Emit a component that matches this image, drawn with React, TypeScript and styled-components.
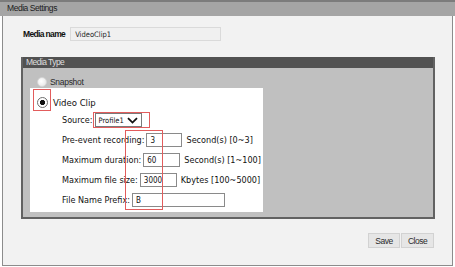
import React from "react";
import styled, { createGlobalStyle } from "styled-components";

const Global = createGlobalStyle`
  html, body { margin: 0; padding: 0; background: #ffffff; }
  body { font-family: "Liberation Sans", Arial, sans-serif; }
  * { box-sizing: border-box; }
`;

const Dialog = styled.div`
  width: 455px;
  height: 267px;
  display: flex;
  flex-direction: column;
  background: #ffffff;
`;

const TitleBar = styled.div`
  height: 16px;
  border-top: 2px solid #7c7c7c;
  background: #a5a5a5;
  color: #1c1c1c;
  font-size: 8.5px;
  letter-spacing: -0.45px;
  line-height: 13px;
  padding-left: 7px;
`;

const Body = styled.div`
  flex: 1;
  margin: 0 2px 1px 2px;
  border: 1px solid #8c8c8c;
  border-top: none;
  background: #f2f2f2;
  display: flex;
  flex-direction: column;
  padding: 11px 0 0 18px;
`;

const NameRow = styled.div`
  display: flex;
  align-items: center;
  height: 14px;
  padding-left: 2px;
  gap: 5px;
`;

const NameLabel = styled.span`
  font-size: 8.5px;
  letter-spacing: -0.65px;
  font-weight: bold;
  color: #111;
`;

const NameInput = styled.input`
  width: 151px;
  height: 14px;
  border: 1px solid #dadada;
  background: #f0f0f0;
  font-family: "DejaVu Sans Condensed", "DejaVu Sans", sans-serif;
  font-stretch: condensed;
  font-size: 7.5px;
  color: #222222;
  -webkit-text-fill-color: #222222;
  padding: 0 0 0 4px;
  margin: 0;
  outline: none;
`;

const Panel = styled.div`
  margin-top: 16px;
  width: 414px;
  height: 162px;
  border: 2px solid #626262;
  border-top: none;
  display: flex;
  flex-direction: column;
`;

const PanelHeader = styled.div`
  height: 11px;
  background: #525252;
  color: #dedede;
  font-size: 8.5px;
  letter-spacing: -0.55px;
  line-height: 11px;
  padding-left: 3px;
`;

const PanelBody = styled.div`
  flex: 1;
  background: #c0c0c0;
  padding: 7px 0 0 7px;
  display: flex;
  flex-direction: column;
`;

const SnapshotRow = styled.div`
  display: flex;
  align-items: center;
  height: 13px;
  padding-left: 7px;
  gap: 3px;
  font-size: 8.5px;
  letter-spacing: -0.3px;
  color: #2a2a2a;
`;

const Radio = styled.span<{ $checked?: boolean; $disabled?: boolean }>`
  display: inline-block;
  width: ${(p) => (p.$checked ? 11 : 10)}px;
  height: ${(p) => (p.$checked ? 11 : 10)}px;
  border-radius: 50%;
  border: 1px solid ${(p) => (p.$disabled ? "#d6d6d6" : "#6e6e6e")};
  background: ${(p) =>
    p.$disabled
      ? "radial-gradient(circle at 40% 40%, #ffffff, #e2e2e2)"
      : p.$checked
      ? "radial-gradient(circle, #111 0 2.4px, #ffffff 2.9px)"
      : "#fff"};
  flex: none;
`;

const WhiteBox = styled.div`
  position: relative;
  width: 233px;
  height: 124px;
  background: #ffffff;
  padding-top: 5px;
  display: flex;
  flex-direction: column;
  font-family: "DejaVu Sans Condensed", "DejaVu Sans", sans-serif;
  font-stretch: condensed;
  font-size: 9px;
  color: #111;
`;

const VideoRow = styled.div`
  display: flex;
  align-items: center;
  height: 18px;
  padding-left: 7px;
  gap: 5px;
  font-size: 9.5px;
`;

const FormRows = styled.div`
  margin-top: 2px;
  display: flex;
  flex-direction: column;
  gap: 6px;
  padding-left: 32px;
`;

const FormRow = styled.div`
  display: flex;
  align-items: center;
  height: 14px;
  white-space: nowrap;
`;

const FieldInput = styled.input<{ $w: number }>`
  width: ${(p) => p.$w}px;
  height: 14px;
  margin: 0 0 0 2px;
  padding: 0 0 0 3px;
  border: 1px solid #8a8a8a;
  background: #fff;
  font-family: "DejaVu Sans Condensed", "DejaVu Sans", sans-serif;
  font-stretch: condensed;
  font-size: 8px;
  color: #111;
  outline: none;
`;

const Unit = styled.span`
  margin-left: 4px;
`;

const Select = styled.div`
  margin-left: 2px;
  width: 47px;
  height: 14px;
  border: 1px solid #7a7a7a;
  display: flex;
  align-items: center;
  justify-content: space-between;
  padding: 0 3px 0 3px;
  font-size: 7.5px;
`;

const Mark = styled.div<{ $l: number; $t: number; $w: number; $h: number }>`
  position: absolute;
  left: ${(p) => p.$l}px;
  top: ${(p) => p.$t}px;
  width: ${(p) => p.$w}px;
  height: ${(p) => p.$h}px;
  border: 1.5px solid #e25c5c;
  pointer-events: none;
`;

const ButtonRow = styled.div`
  margin-top: 14px;
  width: 414px;
  display: flex;
  justify-content: flex-end;
  gap: 1px;
  padding-right: 1px;
`;

const Button = styled.button<{ $w: number }>`
  width: ${(p) => p.$w}px;
  height: 15px;
  padding: 0;
  border: 1px solid #d2d2d2;
  background: #e6e6e6;
  color: #2b2b2b;
  font-family: "Liberation Sans", Arial, sans-serif;
  font-size: 8.5px;
  letter-spacing: -0.5px;
`;

const Chevron = () => (
  <svg width="11" height="7" viewBox="0 0 11 7">
    <polyline points="1,1.2 5.5,5.6 10,1.2" fill="none" stroke="#111" strokeWidth="1.8" />
  </svg>
);

export default function App() {
  return (
    <>
      <Global />
      <Dialog>
        <TitleBar>Media Settings</TitleBar>
        <Body>
          <NameRow>
            <NameLabel>Media name</NameLabel>
            <NameInput readOnly value="VideoClip1" />
          </NameRow>
          <Panel>
            <PanelHeader>Media Type</PanelHeader>
            <PanelBody>
              <SnapshotRow>
                <Radio $disabled />
                <span>Snapshot</span>
              </SnapshotRow>
              <WhiteBox>
                <VideoRow>
                  <Radio $checked />
                  <span>Video Clip</span>
                </VideoRow>
                <FormRows>
                  <FormRow>
                    <span>Source:</span>
                    <Select>
                      <span>Profile1</span>
                      <Chevron />
                    </Select>
                  </FormRow>
                  <FormRow>
                    <span>Pre-event recording:</span>
                    <FieldInput $w={36} readOnly value="3" />
                    <Unit>Second(s) [0~3]</Unit>
                  </FormRow>
                  <FormRow>
                    <span>Maximum duration:</span>
                    <FieldInput $w={37} readOnly value="60" />
                    <Unit>Second(s) [1~100]</Unit>
                  </FormRow>
                  <FormRow>
                    <span>Maximum file size:</span>
                    <FieldInput $w={37} readOnly value="3000" />
                    <Unit>Kbytes [100~5000]</Unit>
                  </FormRow>
                  <FormRow>
                    <span>File Name Prefix:</span>
                    <FieldInput $w={93} readOnly value="B" />
                  </FormRow>
                </FormRows>
                <Mark $l={3} $t={1} $w={18} $h={22} />
                <Mark $l={63} $t={24} $w={57} $h={16} />
                <Mark $l={95} $t={42} $w={38} $h={80} />
              </WhiteBox>
            </PanelBody>
          </Panel>
          <ButtonRow>
            <Button $w={32}>Save</Button>
            <Button $w={33}>Close</Button>
          </ButtonRow>
        </Body>
      </Dialog>
    </>
  );
}
